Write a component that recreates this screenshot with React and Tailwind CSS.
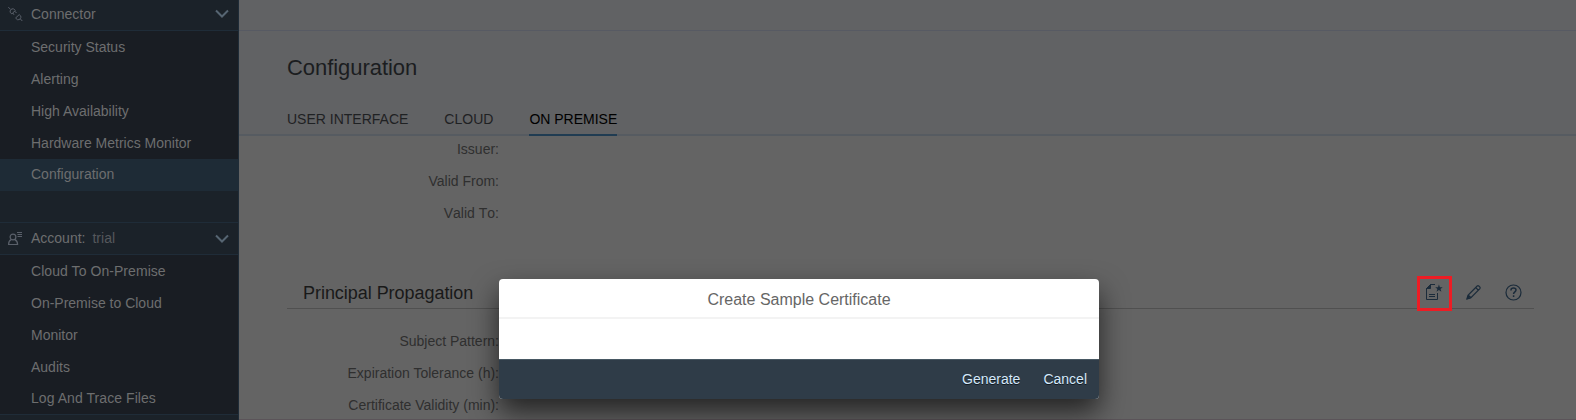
const connectorItems = ["Security Status", "Alerting", "High Availability", "Hardware Metrics Monitor", "Configuration"];
const accountItems = ["Cloud To On-Premise", "On-Premise to Cloud", "Monitor", "Audits", "Log And Trace Files"];

function Chevron() {
  return (
    <svg className="mr-[9px] h-[10px] w-[14px]" viewBox="0 0 14 10" fill="none" stroke="#566572" strokeWidth="2">
      <path d="M1 1.5 7 7.5 13 1.5" />
    </svg>
  );
}

function ConnectorIcon() {
  return (
    <svg className="h-4 w-4" viewBox="0 0 16 16" fill="none" stroke="#5a606a" strokeWidth="1">
      <path d="M.3 1.3 2.5 3.2M2.2 6.4C1.6 4.4 3.3 2.4 5.6 2.8L7.2 4.4 3.9 8ZM6.4 5.4 8.6 6.6M4.8 7 6 8.8" />
      <path d="M7.6 12 11.2 8.6 12.8 10.1C13.5 12.1 11.6 14.2 9.4 13.7ZM12.4 13 14.3 15" />
    </svg>
  );
}

function AccountIcon() {
  return (
    <svg className="h-4 w-4" viewBox="0 0 16 16" fill="none" stroke="#5a606a" strokeWidth="1.2">
      <circle cx="5" cy="6" r="2.9" />
      <path d="M3.2 8.6C1.4 9.4.6 10.7.6 13.5h9C9.6 10.7 8.6 9.4 6.8 8.6" />
      <path d="M9 1.5h5M9.5 3.5H14M9.5 5.5H14" strokeWidth="1" />
    </svg>
  );
}

function NavItem({ label, active, raised, unkerned }) {
  return (
    <div
      className={`h-8 pl-[31px] ${raised ? "leading-[30px]" : "leading-[32px]"} ${active ? "bg-[#1e2b36]" : "bg-[#191d23]"} ${unkerned ? "tracking-[0.06px]" : ""}`}
    >
      {label}
    </div>
  );
}

function Label({ children, unkerned }) {
  return (
    <div className={`h-8 w-[212px] whitespace-nowrap text-right leading-8 ${unkerned ? "[font-kerning:none]" : ""}`}>
      {children}
    </div>
  );
}

function CertificateIcon() {
  return (
    <svg className="mb-[3px] h-4 w-[17px]" viewBox="0 0 17 16" fill="none" stroke="#1b2b3a" strokeWidth="1">
      <path d="M9 .5H4.5L.5 4.5v11h11V9" />
      <path d="M.5 4.5 4.5.5v4Z" fill="#1b2b3a" />
      <path d="M3 10.5h6M3 12.5h6" />
      <path d="m12.9.6 1 2.6h2.8l-2.2 1.7.9 2.8-2.5-1.6-2.4 1.6.9-2.8-2.2-1.7H12Z" fill="#1b2b3a" stroke="none" />
    </svg>
  );
}

function PencilIcon() {
  return (
    <svg className="h-4 w-4" viewBox="0 0 16 16" fill="none" stroke="#1b2b3a" strokeWidth="1.2">
      <path d="M1.3 14.7 2.2 11 11.2 2Q12 1.3 12.8 2L13.9 3.1Q14.5 3.8 13.9 4.6L4.9 13.6ZM9.7 3.5 12.5 6.3M2.2 11 4.9 13.6" />
      <path d="m1 15 .7-2.6 1.9 1.9Z" fill="#1b2b3a" />
    </svg>
  );
}

function HelpIcon() {
  return (
    <svg className="h-[17px] w-[17px]" viewBox="0 0 17 17" fill="none" stroke="#1b2b3a" strokeWidth="1.2">
      <circle cx="8.5" cy="8.5" r="7.5" />
      <path d="M6 6.6V6C6 4.8 7 4.1 8.5 4.1S11 4.9 11 6.1C11 7.9 8.6 7.8 8.6 10M8.6 11.3v1.7" strokeWidth="1.5" />
    </svg>
  );
}

function Sidebar() {
  return (
    <aside className="w-[239px] shrink-0 border-r border-[#1f2c38] bg-[#1b2229] text-[#6d6e6f]">
      <div className="flex h-[31px] items-center border-b border-[#1f2c38] pb-0.5 pl-[8px]">
        <ConnectorIcon />
        <span className="ml-[7px] flex-1">Connector</span>
        <Chevron />
      </div>
      <nav>
        {connectorItems.map((label) => (
          <NavItem key={label} label={label} active={label === "Configuration"} raised={label === "Configuration"} />
        ))}
      </nav>
      <div className="h-[31px]" />
      <div className="flex h-[33px] items-center border-y border-[#1f2c38] pl-[8px]">
        <AccountIcon />
        <span className="ml-[7px] flex-1">
          Account:<span className="ml-[7px] text-[#55585c]">trial</span>
        </span>
        <Chevron />
      </div>
      <nav className="h-[160px] overflow-hidden border-b border-[#1f2c38]">
        {accountItems.map((label) => (
          <NavItem key={label} label={label} raised={label === "Log And Trace Files"} unkerned={label.includes("T")} />
        ))}
      </nav>
    </aside>
  );
}

export default function App() {
  return (
    <div className="relative flex h-[420px] w-[1576px] overflow-hidden bg-[#646464] font-['Liberation_Sans',sans-serif] text-[14px]">
      <Sidebar />
      <main className="flex-1 border-b border-[#5b5459]">
        <div className="h-[31px] border-b border-[#575a63] bg-[#616264]" />
        <header className="flex h-[105px] flex-col border-b-2 border-[#565b61] bg-[#616264] pl-12">
          <h1 className="mt-[21px] text-[22px] leading-8 tracking-[-0.05px] text-[#1b1d20]">Configuration</h1>
          <div className="mt-[21px] flex h-[31px] gap-9 leading-[28px] text-[#1f2123]">
            <span>USER INTERFACE</span>
            <span>CLOUD</span>
            <span className="h-[31px] border-b-2 border-[#203c52] text-black">ON PREMISE</span>
          </div>
        </header>
        <div className="pl-12 text-[#2f2f2f]">
          <div className="-mt-[3px] h-[131px]">
            <Label>Issuer:</Label>
            <Label>Valid From:</Label>
            <Label unkerned>Valid To:</Label>
          </div>
          <section className="w-[1247px]">
            <div className="flex h-[45px] items-center border-b border-[#505050] pl-4 pt-[15px]">
              <h2 className="mb-[2px] flex-1 text-[18px] leading-[20px] tracking-[-0.04px] text-[#191919]">Principal Propagation</h2>
              <div className="mr-[12px] flex items-center">
                <div className="flex h-[35px] w-[35px] items-center justify-center border-[3px] border-[#ed1c24]">
                  <CertificateIcon />
                </div>
                <span className="mb-[3px] ml-[14px]"><PencilIcon /></span>
                <span className="mb-[3px] ml-[23px]"><HelpIcon /></span>
              </div>
            </div>
            <div className="mt-4">
              <Label>Subject Pattern:</Label>
              <Label>Expiration Tolerance (h):</Label>
              <Label>Certificate Validity (min):</Label>
            </div>
          </section>
        </div>
      </main>
      <div role="dialog" className="absolute left-[499px] top-[279px] h-[120px] w-[600px] overflow-hidden rounded-[4px] bg-white shadow-[0_13px_28px_rgba(0,0,0,0.65)]">
        <div className="h-10 border-b-2 border-[#f3f3f3] text-center text-[16px] leading-[42px] text-[#666666]">Create Sample Certificate</div>
        <div className="h-10" />
        <div className="flex h-10 justify-end gap-[23px] border-t border-[#485863] bg-[#2f3c48] pr-3 leading-[39px] text-[#d5e9fb] [text-shadow:0_1px_0_#10181f]">
          <span>Generate</span>
          <span>Cancel</span>
        </div>
      </div>
    </div>
  );
}
